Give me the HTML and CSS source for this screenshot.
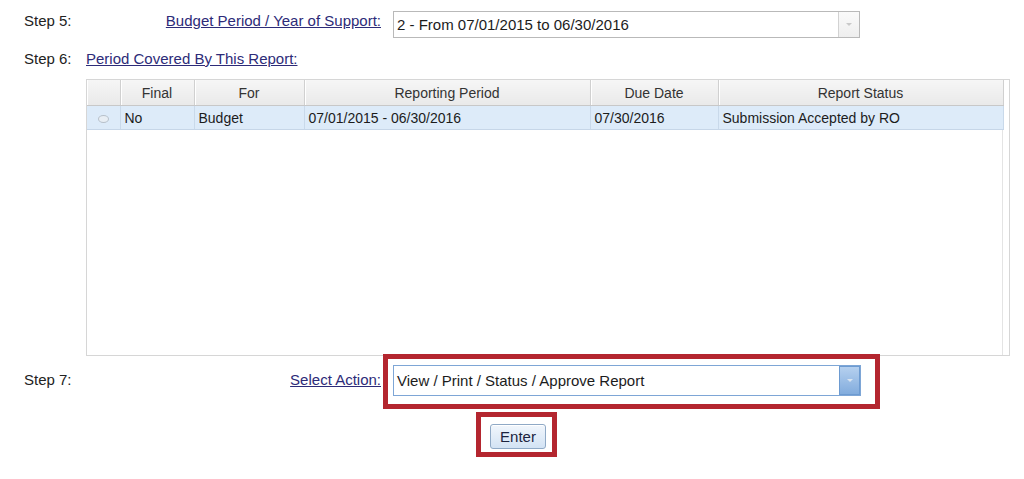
FILE: index.html
```html
<!DOCTYPE html>
<html lang="en">
<head>
  <meta charset="UTF-8" />
  <title>Report Selection</title>
  <link rel="stylesheet" href="styles.css">
</head>
<body>
  <div class="form">
    <div class="row step5">
      <span class="step">Step 5:</span>
      <a class="label" href="#">Budget Period / Year of Support:</a>
      <div class="select plain">
        <span class="value">2 - From 07/01/2015 to 06/30/2016</span>
        <span class="arrow"><i></i></span>
      </div>
    </div>

    <div class="row step6">
      <span class="step">Step 6:</span>
      <a class="label left" href="#">Period Covered By This Report:</a>
    </div>

    <div class="grid">
      <table>
        <colgroup>
          <col style="width:33px">
          <col style="width:74px">
          <col style="width:110px">
          <col style="width:286px">
          <col style="width:128px">
          <col style="width:285px">
        </colgroup>
        <thead>
          <tr>
            <th></th>
            <th>Final</th>
            <th>For</th>
            <th>Reporting Period</th>
            <th>Due Date</th>
            <th>Report Status</th>
          </tr>
        </thead>
        <tbody>
          <tr class="selected">
            <td class="radio"><span></span></td>
            <td>No</td>
            <td>Budget</td>
            <td>07/01/2015 - 06/30/2016</td>
            <td>07/30/2016</td>
            <td>Submission Accepted by RO</td>
          </tr>
        </tbody>
      </table>
    </div>

    <div class="row step7">
      <span class="step">Step 7:</span>
      <a class="label" href="#">Select Action:</a>
      <div class="highlight action">
        <div class="select focus">
          <span class="value">View / Print / Status / Approve Report</span>
          <span class="arrow"><i></i></span>
        </div>
      </div>
    </div>

    <div class="highlight enter">
      <button class="btn">Enter</button>
    </div>
  </div>
</body>
</html>
```

FILE: styles.css
```css
html, body {
  margin: 0;
  padding: 0;
  background: #fff;
  font-family: 'Liberation Sans', Arial, sans-serif;
  color: #1c1c1c;
  overflow: hidden;
}

.form {
  padding: 11px 0 0 24px;
}

.row {
  display: grid;
  grid-template-columns: 62px 297px auto;
  align-items: center;
  font-size: 15px;
}

.step {
  color: #222;
}

.label {
  color: #2d2b78;
  text-decoration: underline;
  text-align: right;
  padding-right: 2px;
}

.label.left {
  text-align: left;
  grid-column: 2 / 4;
}

.step5,
.step7 {
  align-items: start;
}

.step5 .step,
.step5 .label {
  padding-top: 1px;
}

.step7 .step,
.step7 .label {
  padding-top: 15px;
}

.step6 {
  margin-top: 10px;
  height: 20px;
}

/* fake select boxes */
.select {
  display: flex;
  align-items: stretch;
  height: 25px;
  border: 1px solid #b9b9b9;
  background: #fff;
  font-size: 15px;
}

.select .value {
  flex: 1;
  padding-left: 3px;
  line-height: 25px;
  white-space: nowrap;
}

.select .arrow {
  width: 20px;
  display: flex;
  align-items: center;
  justify-content: center;
  border-left: 1px solid #d2d2d2;
  background: linear-gradient(#fafafa, #eeeeee);
}

.select .arrow i {
  width: 0;
  height: 0;
  border-left: 3px solid transparent;
  border-right: 3px solid transparent;
  border-top: 3px solid #c9c9c9;
}

.step5 .select {
  margin-left: 10px;
  width: 465px;
}

.select.focus {
  width: 466px;
  height: 29px;
  border-color: #7ea6d6;
}

.select.focus .value {
  line-height: 29px;
}

.select.focus .arrow {
  width: 19px;
  border: 1px solid #6d9bd1;
  background: linear-gradient(#b5d0ef, #82acdd);
}

.select.focus .arrow i {
  border-top-color: #d9e4f0;
}

/* grid */
.grid {
  margin: 11px 0 0 62px;
  width: 922px;
  height: 275px;
  border: 1px solid #d6d6d6;
  box-shadow: inset -6px 0 0 #fff, inset -7px 0 0 #e4e4e4;
  background: #fff;
}

table {
  border-collapse: collapse;
  table-layout: fixed;
  width: 916px;
  font-size: 14px;
}

th {
  height: 25px;
  font-weight: normal;
  color: #333;
  text-align: center;
  background: linear-gradient(#f6f6f6, #e9e9e9);
  border-right: 1px solid #d0d0d0;
  border-bottom: 1px solid #c8c8c8;
  box-shadow: inset 1px 0 0 #fff;
  padding: 0;
}

td {
  height: 23px;
  padding: 0 4px;
  white-space: nowrap;
  border-right: 1px solid #c9d9ea;
  border-bottom: 1px solid #c6d6e8;
}

tr.selected td {
  background: #ddebf9;
}

td.radio {
  text-align: center;
}

td.radio span {
  display: inline-block;
  width: 9px;
  height: 6px;
  border: 1px solid #b7c0ca;
  border-radius: 50%;
  background: #e8eef4;
  vertical-align: middle;
}

/* annotation boxes */
.highlight {
  border: 5px solid #b4262f;
}

.action {
  margin-top: -2px;
  width: 468px;
  padding: 6px 14px 8px 5px;
}

.enter {
  width: 56px;
  margin: 3px 0 0 452px;
  padding: 7px 6px 3px 9px;
}

.btn {
  display: block;
  width: 56px;
  height: 25px;
  padding: 0;
  font-family: inherit;
  font-size: 15px;
  color: #1d2440;
  border: 1px solid #8fa9c6;
  border-radius: 3px;
  background: linear-gradient(#f1f6fc, #d3e3f4);
  box-shadow: inset 0 1px 0 #fff;
}
```
